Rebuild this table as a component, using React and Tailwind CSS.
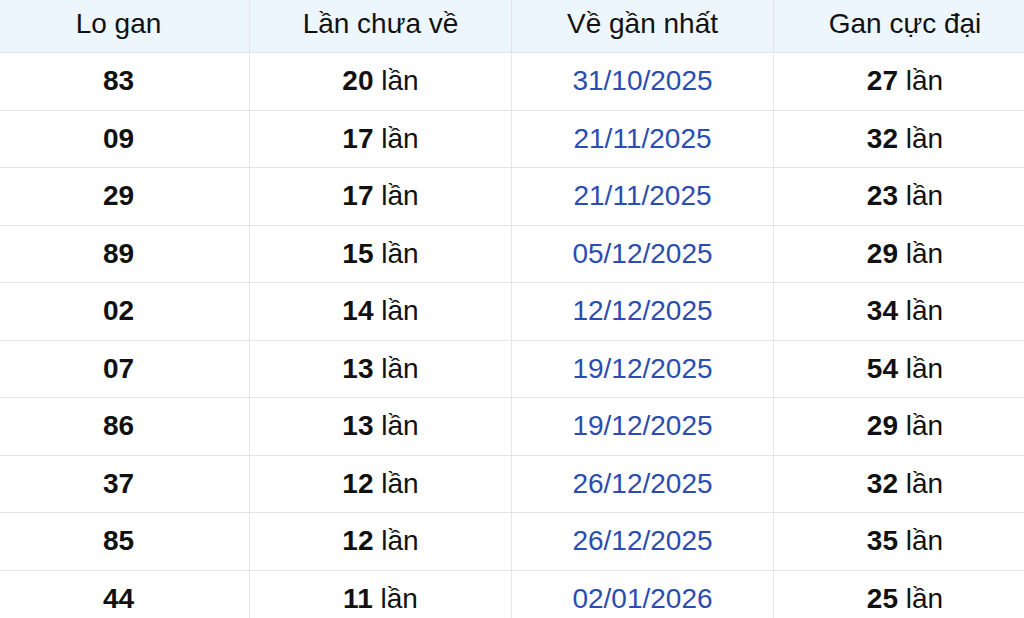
import React from "react";

const rows = [
  ["83", "20", "31/10/2025", "27"],
  ["09", "17", "21/11/2025", "32"],
  ["29", "17", "21/11/2025", "23"],
  ["89", "15", "05/12/2025", "29"],
  ["02", "14", "12/12/2025", "34"],
  ["07", "13", "19/12/2025", "54"],
  ["86", "13", "19/12/2025", "29"],
  ["37", "12", "26/12/2025", "32"],
  ["85", "12", "26/12/2025", "35"],
  ["44", "11", "02/01/2026", "25"],
];

const headers = ["Lo gan", "Lần chưa về", "Về gần nhất", "Gan cực đại"];

export default function App() {
  return (
    <div
      className="w-[1024px] h-[618px] overflow-hidden bg-white text-[#111] text-[28px]"
      style={{ fontFamily: '"Liberation Sans", Arial, sans-serif' }}
    >
      <div className="-ml-3 w-[1048px] grid grid-cols-[262px_262px_262px_262px]">
        {headers.map((h, i) => (
          <div
            key={h}
            className={`h-[53px] pb-[5px] flex items-center justify-center bg-[#eef6fd] border-b border-[#e2e6ea] ${i < 3 ? "border-r" : ""}`}
          >
            {h}
          </div>
        ))}
        {rows.map((r, ri) => (
          <React.Fragment key={ri}>
            <div className="h-[57.5px] flex items-center justify-center border-b border-r border-[#e4e4e4] font-bold">
              {r[0]}
            </div>
            <div className="h-[57.5px] flex items-center justify-center border-b border-r border-[#e4e4e4]">
              <span className="font-bold">{r[1]}</span>&nbsp;lần
            </div>
            <div className="h-[57.5px] flex items-center justify-center border-b border-r border-[#e4e4e4] text-[#2b4db1]">
              {r[2]}
            </div>
            <div className="h-[57.5px] flex items-center justify-center border-b border-[#e4e4e4]">
              <span className="font-bold">{r[3]}</span>&nbsp;lần
            </div>
          </React.Fragment>
        ))}
      </div>
    </div>
  );
}
